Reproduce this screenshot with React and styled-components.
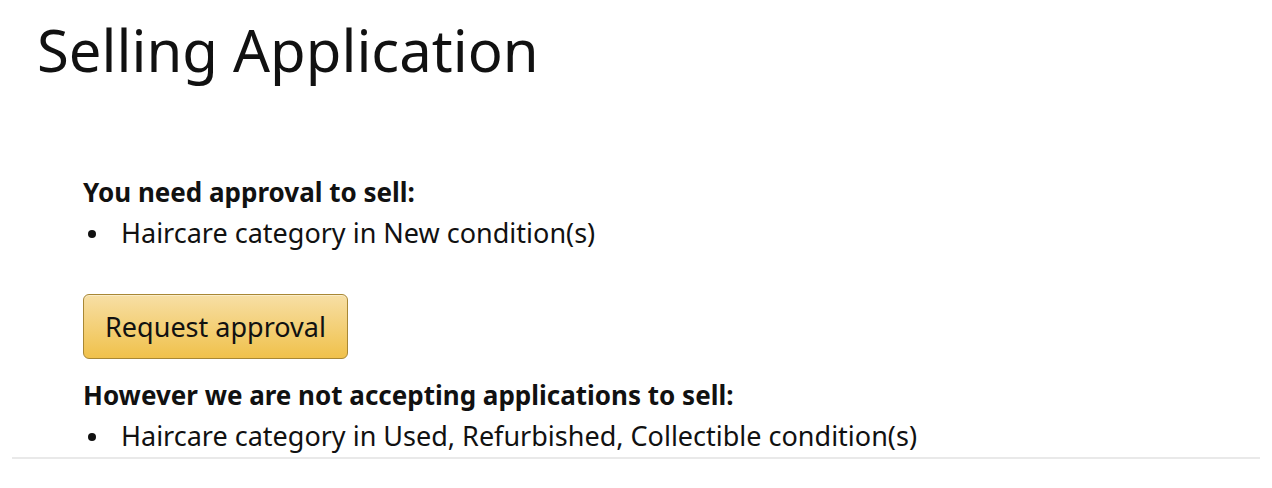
import React from "react";
import styled, { createGlobalStyle } from "styled-components";

const Global = createGlobalStyle`
  body {
    margin: 0;
    background: #fff;
    font-family: "Noto Sans", "Liberation Sans", sans-serif;
    color: #111;
  }
`;

const Page = styled.div`
  padding: 0 12px;
`;

const Title = styled.h1`
  margin: 0;
  padding: 10px 0 0 25px;
  font-size: 58px;
  font-weight: 400;
  line-height: 80px;
`;

const Body = styled.section`
  padding: 82px 0 0 71px;
  border-bottom: 2px solid #e9e9e9;
`;

const Heading = styled.h3`
  margin: 0;
  font-size: 26px;
  font-weight: 700;
  line-height: 40px;
`;

const List = styled.ul`
  margin: 0;
  padding: 0;
  list-style: none;
  font-size: 27px;
  line-height: 42px;
`;

const Item = styled.li`
  position: relative;
  padding-left: 38px;

  &::before {
    content: "";
    position: absolute;
    left: 5px;
    top: 18px;
    width: 8px;
    height: 8px;
    border-radius: 50%;
    background: #111;
  }
`;

const Button = styled.button`
  display: block;
  margin: 40px 0 16px;
  width: 265px;
  height: 65px;
  border: 1px solid #a88734;
  border-radius: 6px;
  background: linear-gradient(to bottom, #f7dfa5, #f0c14b);
  box-shadow: inset 0 1px 0 rgba(255, 255, 255, 0.4);
  font-family: inherit;
  font-size: 27px;
  color: #111;
`;

export default function App() {
  return (
    <Page>
      <Global />
      <Title>Selling Application</Title>
      <Body>
        <Heading>You need approval to sell:</Heading>
        <List>
          <Item>Haircare category in New condition(s)</Item>
        </List>
        <Button>Request approval</Button>
        <Heading>However we are not accepting applications to sell:</Heading>
        <List>
          <Item>Haircare category in Used, Refurbished, Collectible condition(s)</Item>
        </List>
      </Body>
    </Page>
  );
}
